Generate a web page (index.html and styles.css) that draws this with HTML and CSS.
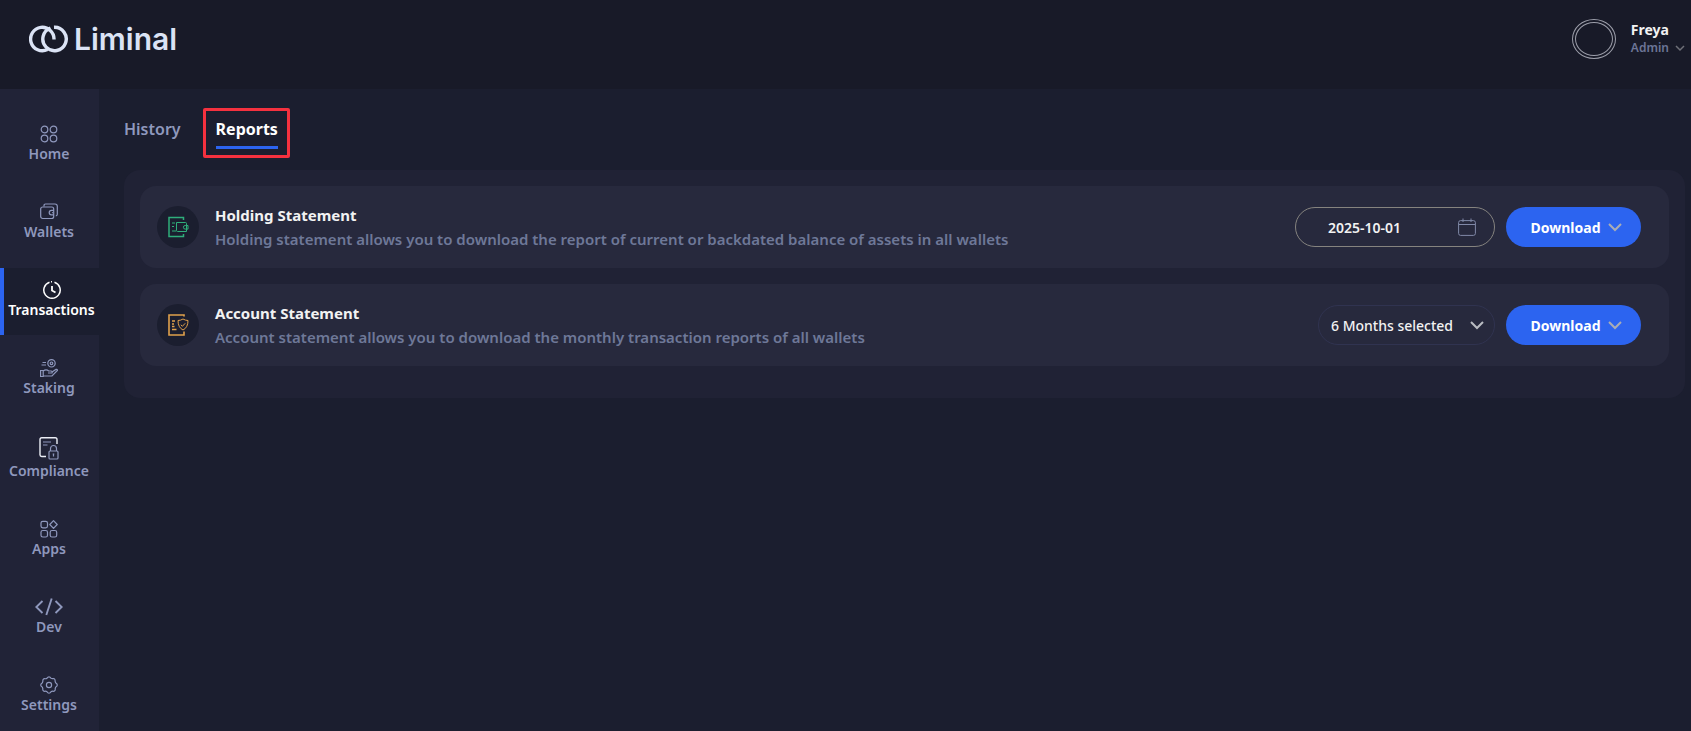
FILE: index.html
```html
<!DOCTYPE html>
<html lang="en">
<head>
  <meta charset="UTF-8">
  <meta name="viewport" content="width=device-width, initial-scale=1.0">
  <title>Liminal - Reports</title>
  <link rel="stylesheet" href="styles.css">
</head>
<body>
  <header class="topbar">
    <a class="logo" href="#">
      <svg width="39" height="28" viewBox="0 0 39 28" stroke-width="3.4">
        <path d="M18.500 24.500A11.700 11.700 0 1 1 25 14.500"/>
        <path d="M21.500 3A11.700 11.700 0 1 0 25 2.300"/>
      </svg>
      <span>Liminal</span>
    </a>
    <div class="user">
      <span class="avatar"></span>
      <div>
        <div class="user-name">Freya</div>
        <button class="user-role">Admin
          <svg width="10" height="7" viewBox="0 0 10 7" stroke-width="1.500"><path d="M1 1l4 4 4-4"/></svg>
        </button>
      </div>
    </div>
  </header>

  <div class="layout">
    <nav class="sidebar">
      <a href="#">
        <svg width="18" height="18" viewBox="0 0 18 18"><circle cx="4.500" cy="4.500" r="3.300"/><circle cx="13.500" cy="4.500" r="3.300"/><circle cx="4.500" cy="13.500" r="3.300"/><circle cx="13.500" cy="13.500" r="3.300"/></svg>
        Home
      </a>
      <a href="#">
        <svg width="18" height="18" viewBox="0 0 18 18"><rect x=".7" y="4" width="13" height="11.500" rx="2"/><path d="M4 3.500V2.700Q4 1 5.500 1H15q2.300 0 2.300 2.300v8q0 1.500-1.500 1.500M14 7.300h-2.500a2.300 2.300 0 0 0 0 4.600H14M12 9.600h.8"/></svg>
        Wallets
      </a>
      <a class="active" href="#">
        <svg width="18" height="18" viewBox="0 0 18 18"><path d="M11.500 1.200A8.200 8.200 0 1 1 6.500 1.200M8 .8h1" stroke-width="1.500"/><path d="M9 5v4.500l3.500 2" stroke-width="1.800"/></svg>
        Transactions
      </a>
      <a href="#">
        <svg width="18" height="18" viewBox="0 0 18 18"><circle cx="11.500" cy="4.300" r="3.700"/><circle cx="11.500" cy="4.300" r="1.300"/><path d="M2.500 3.500H6M1.500 6H6M.6 11.500h2.600v6H.6zM3.200 12q3-2.200 5.500 0h2.500q1.500.5.8 2H8M12 13l4-2.600q1.500-.4 1.400 1L12 17H3.200"/></svg>
        Staking
      </a>
      <a href="#">
        <svg width="20" height="23" viewBox="0 0 20 23"><path d="M18 7V2.500Q18 .8 16.300.8H2.700Q1 .8 1 2.500v15.300q0 1.700 1.700 1.700H7" stroke="#eceef6" stroke-width="1.400"/><path d="M4 5h8M4 8h4.500M11.500 14v-2.500a3 3 0 0 1 6 0V14"/><rect x="10" y="14" width="9" height="8" rx="1"/><path d="M14.500 16.500v3M13.700 17h1.600"/></svg>
        Compliance
      </a>
      <a href="#">
        <svg width="18" height="18" viewBox="0 0 18 18"><rect x="1" y="1.300" width="6.500" height="6.500" rx="1.800"/><path d="M13.500.7l3.700 3.800-3.700 3.800-3.700-3.800z" stroke-linejoin="round"/><rect x="1" y="10.500" width="6.500" height="6.500" rx="1.800"/><rect x="10.200" y="10.500" width="6.500" height="6.500" rx="1.800"/></svg>
        Apps
      </a>
      <a href="#">
        <svg width="28" height="18" viewBox="0 0 28 18"><path d="M7.500 3L1.300 9l6.200 6M20.500 3l6.200 6-6.200 6M16.700.5l-5.400 16.500" stroke-width="1.900"/></svg>
        Dev
      </a>
      <a href="#">
        <svg width="18" height="18" viewBox="0 0 18 18"><circle cx="9" cy="9" r="2.600"/><path d="M9 .8Q10.200.8 11 2.300 12.300 3 13.500 2.500 14.700 2.800 15 3.800 15 5.500 15.600 6.700 17.300 7.800 17.300 9 17.200 10.300 15.600 11.200 15 12.500 15.200 14 14.700 15.200 13.300 15.300 12 15 11 15.700 10.200 17.200 9 17.200 7.800 17.200 7 15.700 6 15 4.700 15.300 3.300 15.200 2.800 14 3 12.500 2.400 11.200.8 10.300.7 9 .8 7.700 2.400 6.700 3 5.500 2.900 4 3.300 2.800 4.600 2.600 6 3 7 2.300 7.800.8 9 .8z"/></svg>
        Settings
      </a>
    </nav>

    <main class="content">
      <div class="tabs">
        <a class="tab" href="#"><span>History</span></a>
        <a class="tab selected" href="#"><span>Reports</span></a>
      </div>

      <section class="panel">
        <div class="card">
          <span class="card-icon green">
            <svg width="22" height="22" viewBox="0 0 22 22"><path d="M16.500 4V1.500H2v19h14.500V18" stroke-width="1.500"/><path d="M5 7h3M5 10.500h2M5 15h4M9.500 6.500h9q1 0 1 1v8h-9q-1 0-1-1zM21 9.500h-2.800a1.700 1.700 0 0 0 0 3.600H21z"/></svg>
          </span>
          <div class="card-text">
            <h2>Holding Statement</h2>
            <p>Holding statement allows you to download the report of current or backdated balance of assets in all wallets</p>
          </div>
          <div class="date-field">
            <input type="text" value="2025-10-01" aria-label="Statement date">
            <svg width="18" height="18" viewBox="0 0 18 18"><rect x=".6" y="2.600" width="16.800" height="14.800" rx="2"/><path d="M1 6.500h16M5 .5v3.500M13 .5v3.500"/></svg>
          </div>
          <button class="download">Download
            <svg width="14" height="9" viewBox="0 0 14 9"><path d="M1 1l6 6 6-6"/></svg>
          </button>
        </div>

        <div class="card">
          <span class="card-icon orange">
            <svg width="22" height="22" viewBox="0 0 22 22"><path d="M17 2.500V1H2v20h15v-3.500" stroke-width="1.600"/><path d="M5 7h3M5 10h2M5 12.500h2.500M5 15.500h4.500" stroke-width="1.400"/><path d="M16 5q2.500 1.500 5 1.500 0 7-5 9.500-5-2.500-5-9.500 2.500 0 5-1.500zM13.800 10.800l1.600 1.500 2.800-3"/></svg>
          </span>
          <div class="card-text">
            <h2>Account Statement</h2>
            <p>Account statement allows you to download the monthly transaction reports of all wallets</p>
          </div>
          <div class="month-field">
            <select aria-label="Months">
              <option>6 Months selected</option>
            </select>
            <svg width="14" height="9" viewBox="0 0 14 9"><path d="M1 1l6 6 6-6"/></svg>
          </div>
          <button class="download">Download
            <svg width="14" height="9" viewBox="0 0 14 9"><path d="M1 1l6 6 6-6"/></svg>
          </button>
        </div>
      </section>
    </main>
  </div>
</body>
</html>
```
FILE: styles.css
```css
* { box-sizing: border-box; }
body { margin: 0; min-height: 100vh; display: flex; flex-direction: column; background-color: #1b1e2f; color: #f2f2f2; font-family: "Noto Sans", sans-serif; font-size: 14px; }
a { color: inherit; text-decoration: none; }
button, input, select { font: inherit; color: inherit; background: none; border: none; padding: 0; margin: 0; }
button, select { cursor: pointer; }
svg { fill: none; stroke: currentColor; flex: none; }

.topbar { display: flex; justify-content: space-between; height: 89px; padding: 15px 6px 0 29px; background-color: #181a28; }
.logo { display: flex; align-items: center; gap: 6px; height: 48px; color: #dbe3f5; font-family: Inter, sans-serif; font-size: 30px; font-weight: 600; }
.user { display: flex; align-items: center; gap: 15px; height: 48px; }
.avatar { width: 44px; height: 40px; border: 4px double #9b9da9; border-radius: 50%; }
.user-name { font-weight: 700; line-height: 18px; }
.user-role { display: flex; align-items: center; gap: 6px; color: #6c7596; font-size: 12px; font-weight: 600; line-height: 18px; }
.user-role svg { stroke: #6f7078; }

.layout { display: flex; flex: 1; }
.sidebar { display: flex; flex-direction: column; gap: 11px; width: 99px; padding-top: 23px; background-color: #212337; }
.sidebar a { display: flex; flex-direction: column; align-items: center; gap: 2px; padding: 13px 1px 16px 0; color: #8f98bd; font-weight: 600; line-height: 18px; }
.sidebar a.active { padding-right: 0; border-left: 4px solid #2c64f0; background-color: #1b1e2f; color: #fff; }
.sidebar svg { stroke-width: 1.2; }

.content { flex: 1; min-width: 0; padding: 19px 6px 0 25px; }
.tabs { display: flex; align-items: flex-start; gap: 22px; margin-bottom: 12px; font-size: 16px; font-weight: 600; line-height: 22px; color: #8f98bd; }
.tab { padding: 10px 0; }
.tab.selected { padding: 7px 9px 6px 10px; border: 3px solid #f5313f; border-radius: 2px; color: #fff; font-weight: 700; }
.tab.selected span { display: block; padding-bottom: 6px; border-bottom: 3px solid #2c64f0; }

.panel { display: flex; flex-direction: column; gap: 16px; padding: 16px 16px 32px; background-color: #202235; border-radius: 16px; }
.card { display: flex; align-items: center; gap: 11px; padding: 17px 28px 17px 17px; background-color: #27293d; border-radius: 16px; }
.card-icon { display: flex; align-items: center; justify-content: center; width: 42px; height: 42px; border-radius: 50%; background-color: #1b1e2f; }
.green { color: #2fae7b; }
.orange { color: #e0a14c; }
.card-text { flex: 1; padding-left: 5px; }
.card-text h2 { margin: 0; font-size: 15px; font-weight: 700; line-height: 24px; }
.card-text p { margin: 0; font-size: 15px; font-weight: 600; line-height: 24px; color: #6e7898; }

.date-field { display: flex; align-items: center; justify-content: space-between; width: 200px; height: 40px; padding: 0 18px 0 32px; border: 1px solid #85837f; border-radius: 20px; font-weight: 600; }
.date-field input { width: 100px; }
.date-field svg { color: #8189a8; }
.month-field { display: grid; align-items: center; width: 177px; height: 40px; border: 1px solid #303350; border-radius: 20px; font-weight: 500; }
.month-field select { grid-area: 1 / 1; height: 38px; padding: 0 36px 0 12px; appearance: none; }
.month-field svg { grid-area: 1 / 1; justify-self: end; margin-right: 10px; stroke: #b9bcc2; stroke-width: 2; pointer-events: none; }
.download { display: flex; align-items: center; justify-content: center; gap: 8px; width: 135px; height: 40px; padding-left: 6px; border-radius: 20px; background-color: #2c64f0; color: #fff; font-weight: 700; }
.download svg { stroke: #a9adb5; stroke-width: 2; }
```
